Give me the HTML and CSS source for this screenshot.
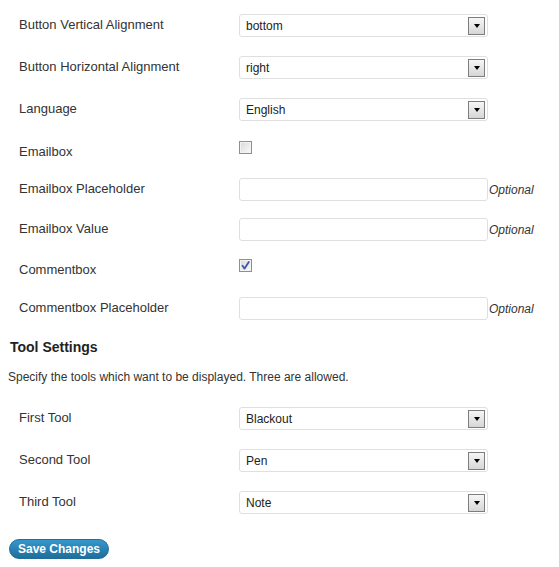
FILE: index.html
```html
<!DOCTYPE html>
<html>
<head>
<meta charset="utf-8">
<link rel="stylesheet" href="styles.css">
</head>
<body>
<div class="wrap">
  <div class="table">
    <div class="row row-sel">
      <div class="label">Button Vertical Alignment</div>
      <div class="field"><div class="select"><span class="val">bottom</span><span class="arrow"></span></div></div>
    </div>
    <div class="row row-sel">
      <div class="label">Button Horizontal Alignment</div>
      <div class="field"><div class="select"><span class="val">right</span><span class="arrow"></span></div></div>
    </div>
    <div class="row row-sel">
      <div class="label">Language</div>
      <div class="field"><div class="select"><span class="val">English</span><span class="arrow"></span></div></div>
    </div>
    <div class="row row-cb">
      <div class="label">Emailbox</div>
      <div class="field"><span class="checkbox"></span></div>
    </div>
    <div class="row row-in">
      <div class="label">Emailbox Placeholder</div>
      <div class="field"><span class="input"></span><span class="hint">Optional</span></div>
    </div>
    <div class="row row-in">
      <div class="label">Emailbox Value</div>
      <div class="field"><span class="input"></span><span class="hint">Optional</span></div>
    </div>
    <div class="row row-cb row-cb-tall">
      <div class="label">Commentbox</div>
      <div class="field"><span class="checkbox checked"><svg viewBox="0 0 13 13" width="13" height="13"><path d="M3.5 6.8 L5.6 9.6 L9.8 3" fill="none" stroke="#3d56a6" stroke-width="1.8" stroke-linecap="round" stroke-linejoin="round"/></svg></span></div>
    </div>
    <div class="row row-in">
      <div class="label">Commentbox Placeholder</div>
      <div class="field"><span class="input"></span><span class="hint">Optional</span></div>
    </div>
  </div>

  <h3 class="heading">Tool Settings</h3>
  <p class="desc">Specify the tools which want to be displayed. Three are allowed.</p>

  <div class="table table-tools">
    <div class="row row-sel">
      <div class="label">First Tool</div>
      <div class="field"><div class="select"><span class="val">Blackout</span><span class="arrow"></span></div></div>
    </div>
    <div class="row row-sel">
      <div class="label">Second Tool</div>
      <div class="field"><div class="select"><span class="val">Pen</span><span class="arrow"></span></div></div>
    </div>
    <div class="row row-sel">
      <div class="label">Third Tool</div>
      <div class="field"><div class="select"><span class="val">Note</span><span class="arrow"></span></div></div>
    </div>
  </div>

  <div class="submit"><span class="button">Save Changes</span></div>
</div>
</body>
</html>
```

FILE: styles.css
```css
html, body {
  margin: 0;
  padding: 0;
  background: #fff;
}
body {
  font-family: "Liberation Sans", Arial, sans-serif;
  color: #333;
}
.wrap {
  padding: 5px 0 0 8px;
}
.row {
  display: flex;
  align-items: flex-start;
}
.label {
  width: 220px;
  padding-left: 11px;
  font-size: 13px;
  line-height: 16px;
  color: #333;
}
.field {
  display: flex;
  align-items: center;
}
.row-sel {
  padding: 9px 0 10px;
}
.row-sel .label {
  margin-top: 3px;
}
.row-cb {
  padding: 10px 0 0;
  height: 28px;
}
.row-cb-tall {
  height: 29px;
}
.row-cb .label {
  margin-top: 3px;
}
.row-in {
  padding: 9px 0 8px;
}
.row-in .label {
  margin-top: 3px;
}
.select, .input {
  box-sizing: border-box;
  width: 249px;
  height: 23px;
  border: 1px solid #dfdfdf;
  border-radius: 3px;
  background: #fff;
}
.select {
  display: flex;
  align-items: center;
  justify-content: space-between;
  padding-left: 6px;
}
.val {
  font-size: 12px;
  color: #222;
}
.arrow {
  box-sizing: border-box;
  width: 17px;
  height: 18px;
  margin-right: 2px;
  border: 1px solid #7d7d7d;
  background: linear-gradient(#f6f6f6, #d6d6d6);
  display: flex;
  align-items: center;
  justify-content: center;
}
.arrow::after {
  content: "";
  width: 0;
  height: 0;
  border-left: 3.5px solid transparent;
  border-right: 3.5px solid transparent;
  border-top: 4px solid #000;
}
.input {
  display: block;
}
.hint {
  font-size: 12px;
  font-style: italic;
  color: #333;
  margin-left: 1px;
}
.checkbox {
  box-sizing: border-box;
  display: block;
  width: 13px;
  height: 13px;
  border: 1px solid #8f8f8f;
  background: linear-gradient(135deg, #d8d8d8, #fbfbfb);
  box-shadow: inset 0 0 0 1px #f2f2f2;
  position: relative;
}
.checkbox svg {
  position: absolute;
  left: -1px;
  top: -1px;
}
.heading {
  margin: 10px 0 0;
  padding-left: 2px;
  font-size: 14px;
  line-height: 18px;
  font-weight: bold;
  color: #222;
}
.desc {
  margin: 13px 0 0;
  font-size: 12px;
  line-height: 16px;
  color: #333;
}
.table-tools {
  margin-top: 13px;
}
.submit {
  padding: 15px 0 0 1px;
}
.button {
  display: inline-block;
  box-sizing: border-box;
  height: 20px;
  padding: 0 8px;
  border: 1px solid #1f6d98;
  border-radius: 11px;
  background: linear-gradient(#3597cc, #1f6e9b);
  color: #fff;
  font-size: 12px;
  font-weight: bold;
  line-height: 18px;
}
```
